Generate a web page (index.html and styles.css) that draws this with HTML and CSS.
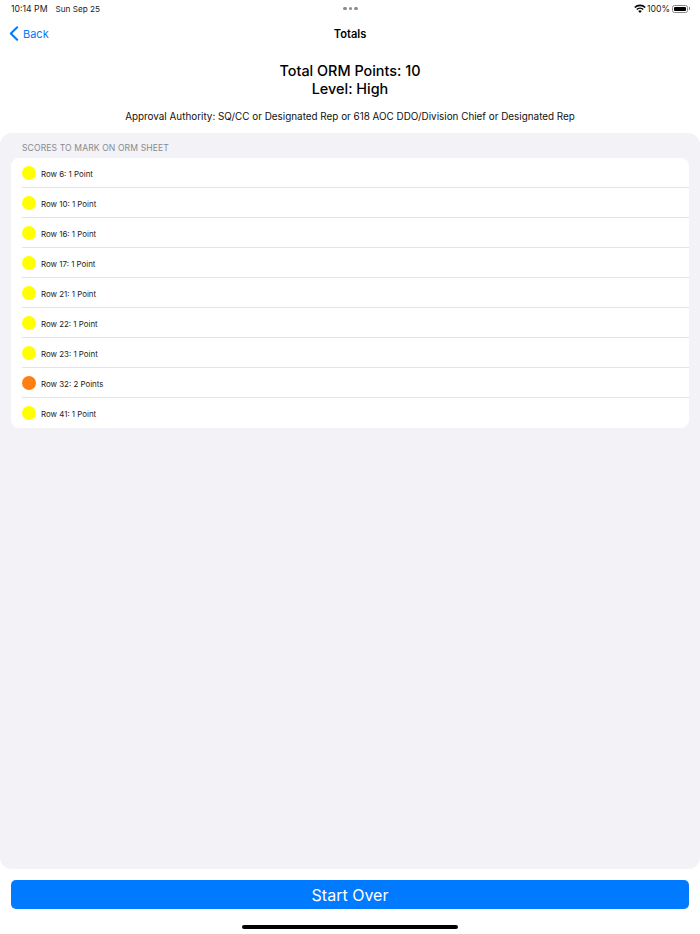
FILE: index.html
```html
<!DOCTYPE html>
<html lang="en">
<head>
  <meta charset="UTF-8">
  <title>Totals</title>
  <meta name="viewport" content="width=device-width, initial-scale=1.0" />
  <link rel="stylesheet" href="styles.css">
</head>
<body>
  <div class="status-bar">
    <div class="status-time">
      <span>10:14 PM</span>
      <span class="status-date">Sun Sep 25</span>
    </div>
    <div class="status-dots"><i></i><i></i><i></i></div>
    <div class="status-right">
      <svg class="wifi" width="12" height="9" viewBox="0 0 12 9">
        <path d="M0.2 3 A8.2 8.2 0 0 1 11.8 3 L10.7 4.1 A6.7 6.7 0 0 0 1.3 4.1 Z" fill="#000"/>
        <path d="M2.2 5 A5.4 5.4 0 0 1 9.8 5 L8.7 6.1 A3.9 3.9 0 0 0 3.3 6.1 Z" fill="#000"/>
        <path d="M4.2 7 A2.6 2.6 0 0 1 7.8 7 L6 8.9 Z" fill="#000"/>
      </svg>
      <span>100%</span>
      <div class="battery"><div class="battery-fill"></div></div>
      <div class="battery-cap"></div>
    </div>
  </div>

  <div class="nav-bar">
    <a class="back">
      <svg width="10" height="15" viewBox="0 0 10 15">
        <path d="M8.2 1.2 L1.8 7.5 L8.2 13.8" fill="none" stroke="#007aff" stroke-width="2" stroke-linecap="round" stroke-linejoin="round"/>
      </svg>
      <span>Back</span>
    </a>
    <div class="nav-title">Totals</div>
  </div>

  <div class="summary">
    <h2>Total ORM Points: 10<br>Level: High</h2>
    <p>Approval Authority: SQ/CC or Designated Rep or 618 AOC DDO/Division Chief or Designated Rep</p>
  </div>

  <div class="panel">
    <div class="section-title">SCORES TO MARK ON ORM SHEET</div>
    <ul class="score-list">
      <li><span class="dot yellow"></span>Row 6: 1 Point</li>
      <li><span class="dot yellow"></span>Row 10: 1 Point</li>
      <li><span class="dot yellow"></span>Row 16: 1 Point</li>
      <li><span class="dot yellow"></span>Row 17: 1 Point</li>
      <li><span class="dot yellow"></span>Row 21: 1 Point</li>
      <li><span class="dot yellow"></span>Row 22: 1 Point</li>
      <li><span class="dot yellow"></span>Row 23: 1 Point</li>
      <li><span class="dot orange"></span>Row 32: 2 Points</li>
      <li><span class="dot yellow"></span>Row 41: 1 Point</li>
    </ul>
  </div>

  <div class="footer">
    <button>Start Over</button>
    <div class="home-bar"></div>
  </div>
</body>
</html>
```

FILE: styles.css
```css
body {
  font-family: 'Inter', 'Liberation Sans', sans-serif;
  background: white;
  color: black;
  margin: 0;
  height: 934px;
  display: flex;
  flex-direction: column;
  overflow: hidden;
}

/* Status bar */
.status-bar {
  height: 17px;
  margin-bottom: 1px;
  padding: 0 10px 0 11px;
  display: grid;
  grid-template-columns: 1fr auto 1fr;
  align-items: center;
  font-size: 8.7px;
  color: #222;
}

.status-time {
  display: flex;
  align-items: center;
  gap: 8px;
}

.status-date {
  font-size: 8.2px;
}

.status-dots {
  display: flex;
  gap: 2px;
}

.status-dots i {
  width: 3.5px;
  height: 3.5px;
  border-radius: 50%;
  background: #8a8a8e;
}

.status-right {
  display: flex;
  align-items: center;
  justify-content: flex-end;
}

.wifi {
  margin-right: 1px;
}

.battery {
  width: 16px;
  height: 8px;
  margin-left: 2px;
  padding: 1px;
  box-sizing: border-box;
  border: 1px solid #888;
  border-radius: 2.5px;
}

.battery-fill {
  height: 100%;
  background: black;
  border-radius: 1px;
}

.battery-cap {
  width: 1px;
  height: 3px;
  margin-left: 1px;
  background: #888;
}

/* Nav bar */
.nav-bar {
  height: 32px;
  position: relative;
  display: flex;
  align-items: center;
  justify-content: center;
}

.back {
  position: absolute;
  left: 9px;
  top: 8px;
  display: flex;
  align-items: center;
  gap: 4px;
  color: #007aff;
  font-size: 11px;
}

.nav-title {
  font-size: 11.1px;
  font-weight: 600;
}

/* Summary */
.summary {
  text-align: center;
  height: 83px;
  padding-top: 12px;
  box-sizing: border-box;
}

.summary h2 {
  margin: 0;
  font-size: 14.4px;
  line-height: 18px;
  font-weight: 500;
}

.summary p {
  margin: 11px 0 0;
  font-size: 9.9px;
  line-height: 15px;
  color: #111;
}

/* Scores panel */
.panel {
  flex: 1;
  background: #f2f2f7;
  border-radius: 12px;
  padding: 0 11px;
}

.section-title {
  height: 25px;
  padding: 10px 0 0 11px;
  box-sizing: border-box;
  font-size: 8.6px;
  line-height: 11px;
  letter-spacing: 0.1px;
  color: #8a8a8e;
}

.score-list {
  list-style: none;
  margin: 0;
  padding: 0;
  background: white;
  border-radius: 8px;
}

.score-list li {
  height: 30px;
  margin-left: 11px;
  padding-top: 2px;
  box-sizing: border-box;
  display: flex;
  align-items: center;
  font-size: 7.9px;
  color: #222;
  border-bottom: 1px solid #e4e4e7;
}

.score-list li:last-child {
  border-bottom: none;
}

.dot {
  width: 14px;
  height: 14px;
  margin-right: 5px;
  margin-top: -2px;
  border-radius: 50%;
}

.yellow {
  background: #ffff00;
}

.orange {
  background: #ff8012;
}

/* Footer */
.footer {
  height: 65px;
  padding: 11px 11px 0;
  box-sizing: border-box;
}

.footer button {
  display: block;
  width: 100%;
  height: 29px;
  padding: 0;
  background: #007aff;
  color: white;
  border: none;
  border-radius: 5px;
  font-family: inherit;
  font-size: 16px;
  cursor: pointer;
}

.home-bar {
  width: 216px;
  height: 4px;
  margin: 16px auto 0;
  background: black;
  border-radius: 2px;
}
```
